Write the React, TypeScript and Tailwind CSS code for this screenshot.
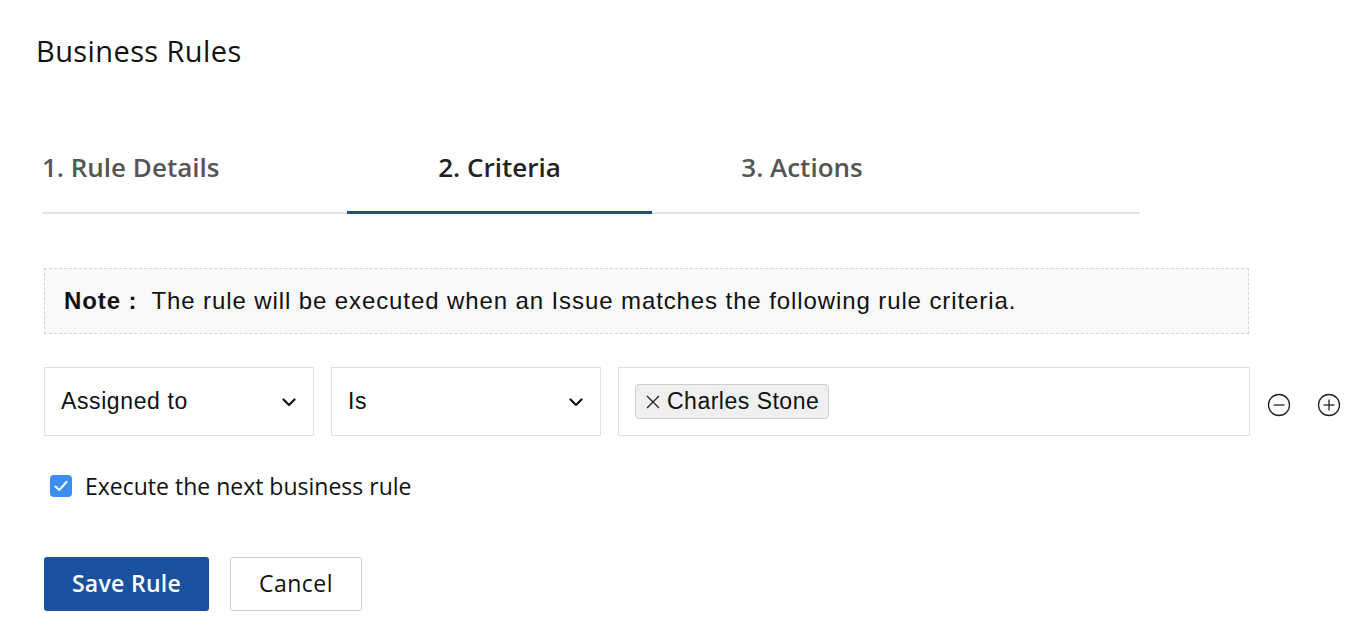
import React from "react";

function ChevronDown() {
  return (
    <svg width="18" height="18" viewBox="0 0 18 18" fill="none">
      <path d="M3.5 6.5 9 12l5.5-5.5" stroke="#111" strokeWidth="2.2" strokeLinecap="round" strokeLinejoin="round" />
    </svg>
  );
}

function CircleIcon({ plus }: { plus?: boolean }) {
  return (
    <svg width="26" height="26" viewBox="0 0 26 26" fill="none">
      <circle cx="13" cy="13" r="10.5" stroke="#222" strokeWidth="1.3" />
      <path d="M7.5 13h11" stroke="#222" strokeWidth="1.3" />
      {plus && <path d="M13 7.5v11" stroke="#222" strokeWidth="1.3" />}
    </svg>
  );
}

const sans = { fontFamily: "'Open Sans', Lato, sans-serif" };
const helv = { fontFamily: "'Liberation Sans', Arial, sans-serif" };

export default function App() {
  return (
    <div className="min-h-screen bg-white text-[#111]" style={sans}>
      <div className="pl-[36px] pt-[33px]">
        <h1 className="text-[29px] leading-[36px] font-normal tracking-[0.4px]">Business Rules</h1>
      </div>

      {/* Tabs */}
      <div className="pl-[42px] pt-[72px]">
        <div className="flex w-[1098px] border-b-2 border-[#e3e3e3] h-[73px]">
          <div className="w-[305px] shrink-0 pt-[7px] text-[26px] font-semibold text-[#555]">1. Rule Details</div>
          <div className="w-[305px] shrink-0 pt-[7px] text-center text-[26px] font-semibold text-[#222] border-b-[3px] border-[#1b4e91] -mb-[2px]">
            2. Criteria
          </div>
          <div className="w-[300px] shrink-0 pt-[7px] text-center text-[26px] font-semibold text-[#555]">3. Actions</div>
        </div>
      </div>

      <div className="pl-[44px]">
        {/* Note */}
        <div
          className="mt-[54px] w-[1205px] h-[66px] border border-dashed border-[#d6d6d6] bg-[#f9f9f9] flex items-center pl-[19px] text-[24px] tracking-[0.9px]"
          style={helv}
        >
          <span className="font-bold mr-[14px]">Note :</span>
          <span>The rule will be executed when an Issue matches the following rule criteria.</span>
        </div>

        {/* Criteria row */}
        <div className="mt-[33px] flex items-center text-[23px] tracking-[0.6px]" style={helv}>
          <div className="w-[270px] shrink-0 h-[69px] border border-[#e0e0e0] flex items-center justify-between pl-[16px] pr-[15px]">
            <span>Assigned to</span>
            <ChevronDown />
          </div>
          <div className="ml-[17px] w-[270px] shrink-0 h-[69px] border border-[#e0e0e0] flex items-center justify-between pl-[16px] pr-[15px]">
            <span>Is</span>
            <ChevronDown />
          </div>
          <div className="ml-[17px] w-[632px] shrink-0 h-[69px] border border-[#e0e0e0] flex items-center pl-[16px]">
            <div className="h-[35px] flex items-center gap-[6px] pl-[9px] pr-[9px] bg-[#efefef] border border-[#cfcfcf] rounded-[4px] tracking-[0.5px]">
              <svg width="16" height="16" viewBox="0 0 16 16" fill="none">
                <path d="M2 2l12 12M14 2 2 14" stroke="#222" strokeWidth="1.3" />
              </svg>
              <span>Charles Stone</span>
            </div>
          </div>
          <div className="ml-[16px] flex shrink-0 items-center gap-[24px] pt-[6px]">
            <CircleIcon />
            <CircleIcon plus />
          </div>
        </div>

        {/* Checkbox */}
        <div className="mt-[33px] flex items-center pl-[6px]">
          <div className="w-[22px] h-[22px] rounded-[4px] bg-[#3b8ef0] flex items-center justify-center">
            <svg width="16" height="16" viewBox="0 0 16 16" fill="none">
              <path d="M2.5 8.5 6.3 12 13.5 3.8" stroke="#fff" strokeWidth="2" strokeLinecap="round" strokeLinejoin="round" />
            </svg>
          </div>
          <span className="ml-[13px] text-[23px]">Execute the next business rule</span>
        </div>

        {/* Buttons */}
        <div className="mt-[53px] flex gap-[21px]">
          <button className="w-[165px] h-[54px] rounded-[3px] bg-[#1b52a0] text-white text-[23px] font-semibold tracking-[0.3px]">
            Save Rule
          </button>
          <button className="w-[132px] h-[54px] rounded-[3px] border border-[#cccccc] bg-white text-[23px] tracking-[0.5px]">
            Cancel
          </button>
        </div>
      </div>
    </div>
  );
}
